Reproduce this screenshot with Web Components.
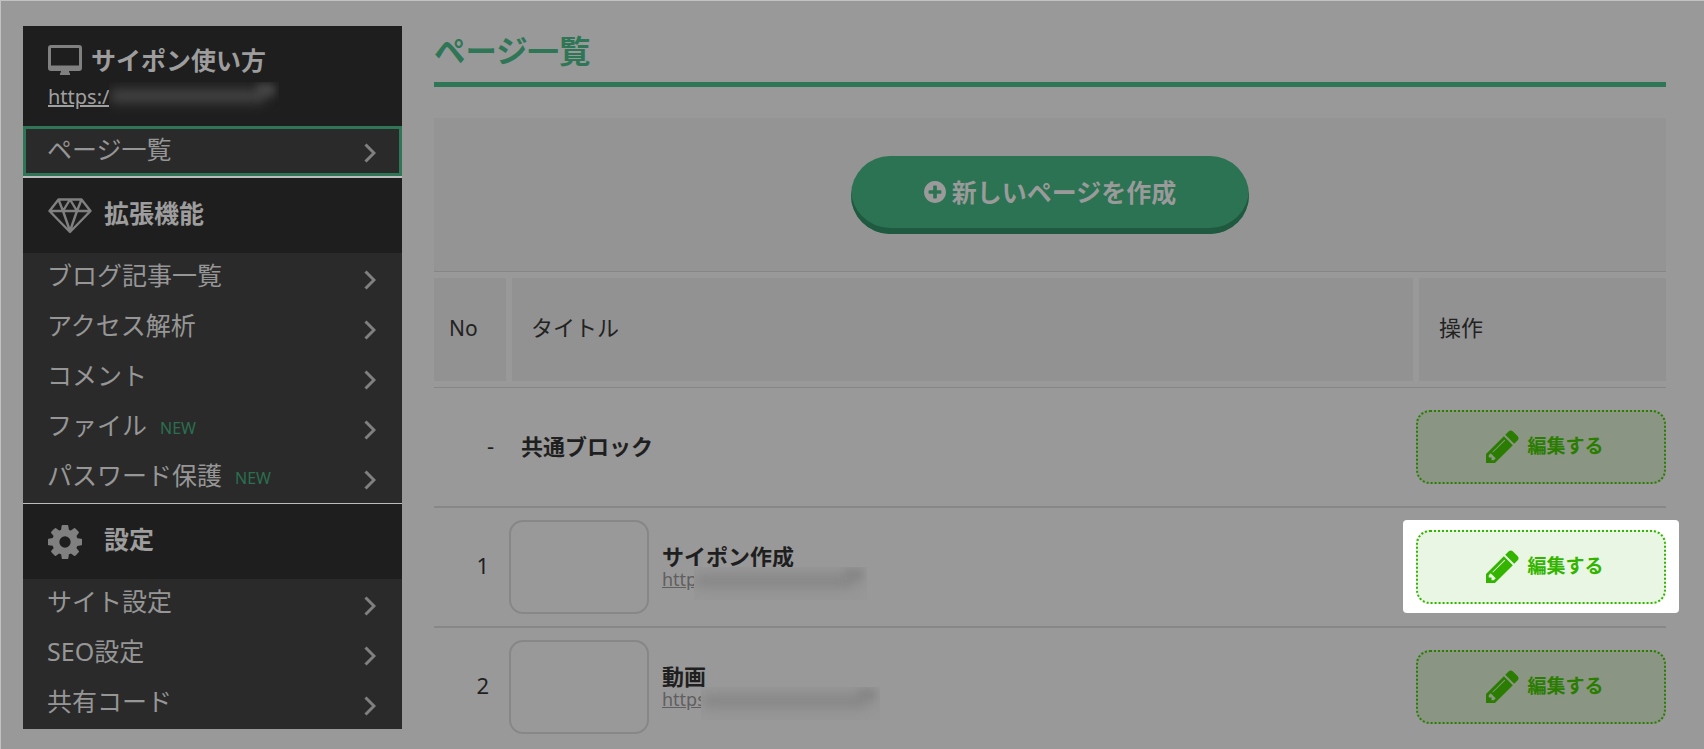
<!DOCTYPE html>
<html lang="ja">
<head>
<meta charset="utf-8">
<title>ページ一覧</title>
<style>
  html, body { margin: 0; height: 749px; overflow: hidden; background: #999; }
  body {
    box-sizing: border-box;
    border-top: 1px solid #c2c2c2;
    border-left: 1px solid #c2c2c2;
    font-family: "Noto Sans", "Noto Sans CJK JP", sans-serif;
  }
</style>
</head>
<body>
<app-shell>
  <side-nav slot="nav"></side-nav>
  <page-list slot="main"></page-list>
</app-shell>

<script>
  const FONT = '"Noto Sans", "Noto Sans CJK JP", sans-serif';
  const ICON = {
    pencil: 'M491 1536l91-91-235-235-91 91v107h128v128h107zm523-928q0-22-22-22-10 0-17 7l-542 542q-7 7-7 17 0 22 22 22 10 0 17-7l542-542q7-7 7-17zm-54-192l416 416-832 832h-416v-416zm683 96q0 53-37 90l-166 166-416-416 166-165q36-38 90-38 53 0 91 38l235 234q37 39 37 91z',
    gear: 'M1152 896q0-106-75-181t-181-75-181 75-75 181 75 181 181 75 181-75 75-181zm512-109v222q0 12-8 23t-20 13l-185 28q-19 54-39 91 35 50 107 138 10 12 10 25t-9 23q-27 37-99 108t-94 71q-12 0-26-9l-138-108q-44 23-91 38-16 136-29 186-7 28-36 28h-222q-14 0-24.5-8.5t-11.5-21.5l-28-184q-49-16-90-37l-141 107q-10 9-25 9-14 0-25-11-126-114-165-168-7-10-7-23 0-12 8-23 15-21 51-66.500t54-70.500q-27-50-41-99l-183-27q-13-2-21-12.500t-8-23.500v-222q0-12 8-23t19-13l186-28q14-46 39-92-40-57-107-138-10-12-10-24 0-10 9-23 26-36 98.500-107.500t94.500-71.500q13 0 26 10l138 107q44-23 91-38 16-136 29-186 7-28 36-28h222q14 0 24.500 8.500t11.500 21.500l28 184q49 16 90 37l142-107q9-9 24-9 13 0 25 10 129 119 165 170 7 8 7 22 0 12-8 23-15 21-51 66.500t-54 70.500q26 50 41 98l183 28q13 2 21 12.500t8 23.500z',
    plus: 'M1344 960v-128q0-26-19-45t-45-19h-256v-256q0-26-19-45t-45-19h-128q-26 0-45 19t-19 45v256h-256q-26 0-45 19t-19 45v128q0 26 19 45t45 19h256v256q0 26 19 45t45 19h128q26 0 45-19t19-45v-256h256q26 0 45-19t19-45zm320-64q0 209-103 385.500t-279.500 279.500-385.500 103-385.500-103-279.500-279.500-103-385.500 103-385.500 279.500-279.500 385.500-103 385.500 103 279.500 279.500 103 385.500z'
  };

  class AppShell extends HTMLElement {
    constructor() {
      super();
      this.attachShadow({ mode: 'open' }).innerHTML = `
        <style>
          :host { display: flex; gap: 32px; padding: 25px 38px 0 22px; font-family: ${FONT}; }
          .nav { flex: 0 0 379px; }
          .main { flex: 1; min-width: 0; }
        </style>
        <div class="nav"><slot name="nav"></slot></div>
        <div class="main"><slot name="main"></slot></div>
      `;
    }
  }

  // 見出し(濃い帯)
  class NavHead extends HTMLElement {
    constructor() {
      super();
      this.attachShadow({ mode: 'open' }).innerHTML = `
        <style>
          :host {
            display: flex; align-items: center; box-sizing: border-box;
            height: 75px; padding-left: 25px; background: #1e1e1e;
            color: #9d9d9d; font-size: 25px; font-weight: 700; line-height: 34px;
          }
          ::slotted(svg) { display: block; flex: none; }
          ::slotted(span) { margin-bottom: 6px; }
        </style>
        <slot name="icon"></slot><slot></slot>
      `;
    }
  }

  class NavItem extends HTMLElement {
    constructor() {
      super();
      const badge = this.hasAttribute('new') ? '<span class="new">NEW</span>' : '';
      this.attachShadow({ mode: 'open' }).innerHTML = `
        <style>
          :host {
            display: flex; align-items: center; box-sizing: border-box;
            height: 50px; padding: 0 26px 0 24px; background: #2a2a2a;
            color: #969696; font-size: 25px; line-height: 34px;
          }
          :host([active]) { border: 3px solid #2e7656; padding: 0 23px 0 21px; }
          .label { margin-bottom: 6px; }
          :host([active]) .label { margin-bottom: 4px; }
          .new { color: #2b6f50; font-size: 16px; margin-left: 13px; }
          svg { margin-left: auto; margin-top: 4px; display: block; }
        </style>
        <span class="label"><slot></slot></span>${badge}
        <svg width="12" height="20" viewBox="0 0 12 20"><path d="M1.500 1.500 10 10 1.500 18.500" fill="none" stroke="#808080" stroke-width="3"/></svg>
      `;
    }
  }

  class SideNav extends HTMLElement {
    constructor() {
      super();
      this.attachShadow({ mode: 'open' }).innerHTML = `
        <style>
          :host { display: block; }
          .site { box-sizing: border-box; height: 100px; padding: 17px 25px 0; background: #1e1e1e; }
          .site-title { display: flex; align-items: center; gap: 9px; height: 34px; color: #9d9d9d; font-size: 25px; font-weight: 700; line-height: 34px; }
          .site-url { display: flex; margin-top: 5px; height: 33px; color: #a0a0a0; font-size: 20px; line-height: 29px; }
          .site-url u { width: 61px; white-space: nowrap; }
          blur-mask { width: 170px; height: 33px; --mask: #1f1f1f; --smear: #484848; }
          .rule { height: 2px; background: #bdbdbd; }
          .rule.thin { height: 1px; }
          svg { display: block; }
        </style>
        <div class="site">
          <div class="site-title">
            <svg width="34" height="30" viewBox="0 0 34 30"><path fill="#808080" fill-rule="evenodd" d="M3 0h28a3 3 0 0 1 3 3v20a3 3 0 0 1-3 3H21c0 1 .5 2 1 2.500v1.500H12v-1.500c.5-.5 1-1.500 1-2.500H3a3 3 0 0 1-3-3V3a3 3 0 0 1 3-3zM3 3v17.500h28V3z"/></svg>
            <span>サイポン使い方</span>
          </div>
          <div class="site-url"><u>https:/</u><blur-mask></blur-mask></div>
        </div>
        <nav-item active>ページ一覧</nav-item>
        <div class="rule"></div>
        <nav-head>
          <svg slot="icon" width="44" height="36" viewBox="0 0 44 36"><path fill="none" stroke="#808080" stroke-width="2.400" stroke-linejoin="round" d="M10.500 1.500h23L42.500 13 22 34 1.500 13zM1.500 13h41M15 13l7 20 7-20M10.500 1.500 15 13l7-11.500L29 13l4.500-11.500"/></svg>
          <span style="margin-left:12px">拡張機能</span>
        </nav-head>
        <nav-item>ブログ記事一覧</nav-item>
        <nav-item>アクセス解析</nav-item>
        <nav-item>コメント</nav-item>
        <nav-item new>ファイル</nav-item>
        <nav-item new>パスワード保護</nav-item>
        <div class="rule thin"></div>
        <nav-head>
          <svg slot="icon" width="34" height="34" viewBox="128 128 1536 1536"><path fill="#808080" d="${ICON.gear}"/></svg>
          <span style="margin-left:22px">設定</span>
        </nav-head>
        <nav-item>サイト設定</nav-item>
        <nav-item>SEO設定</nav-item>
        <nav-item>共有コード</nav-item>
      `;
    }
  }

  // URLのぼかし部分
  class BlurMask extends HTMLElement {
    constructor() {
      super();
      this.attachShadow({ mode: 'open' }).innerHTML = `
        <style>
          :host { display: block; position: relative; overflow: hidden; background: var(--mask); flex: none; }
          i { position: absolute; left: 2px; right: 14px; top: 8px; height: 12px; background: var(--smear); filter: blur(6px); }
          b { position: absolute; right: 4px; top: 2px; width: 18px; height: 12px; background: var(--smear); filter: blur(4px); }
        </style>
        <i></i><b></b>
      `;
    }
  }

  class EditButton extends HTMLElement {
    constructor() {
      super();
      this.attachShadow({ mode: 'open' }).innerHTML = `
        <style>
          :host {
            display: flex; align-items: center; justify-content: center; gap: 8px; position: relative;
            box-sizing: border-box; width: 250px; height: 74px; padding-bottom: 2px;
            border: 2px dotted #2a7d00; border-radius: 14px; background: #8a9584;
            color: #2a7d00; font-size: 19px; font-weight: 700; line-height: 26px;
          }
          :host([hot]) { border-color: #33b500; background: #e9f6e3; color: #33b500; }
          :host([hot])::before {
            content: ""; position: absolute; inset: -12px -15px -11px; border-radius: 4px; background: #fff; z-index: -1;
          }
          svg { display: block; fill: currentColor; margin-left: 8px; }
        </style>
        <svg width="33" height="33" viewBox="128 128 1536 1536"><path d="${ICON.pencil}"/></svg>
        <span><slot></slot></span>
      `;
    }
  }

  class PageRow extends HTMLElement {
    constructor() {
      super();
      const no = this.getAttribute('no');
      const url = this.getAttribute('url');
      const thumb = url ? '<div class="thumb"></div>' : '';
      const link = url
        ? `<div class="url"><u style="width:${this.getAttribute('cut')}px">${url}</u><blur-mask style="width:${this.getAttribute('blur')}px"></blur-mask></div>`
        : '';
      this.attachShadow({ mode: 'open' }).innerHTML = `
        <style>
          :host {
            display: flex; align-items: center;
            height: 118px; border-bottom: 2px solid #878787; color: #1f1f1f; isolation: isolate;
          }
          :host([last]) { border-bottom: 0; }
          .no { flex: 0 0 55px; padding-bottom: 4px; text-align: right; font-size: 22px; line-height: 30px; }
          :host([common]) .no { flex-basis: 60px; }
          .thumb { flex: none; box-sizing: border-box; width: 140px; height: 94px; margin-left: 20px; border: 2px solid #878787; border-radius: 14px; }
          .info { margin-left: 13px; }
          :host([common]) .info { margin-left: 27px; margin-bottom: 2px; }
          .name { font-size: 22px; font-weight: 700; line-height: 28px; }
          .info:has(.url) .name { padding: 5px 0 1px; line-height: 22px; }
          .url { display: flex; height: 24px; color: #5f5f5f; font-size: 18px; line-height: 22px; margin-bottom: 2px; }
          .url u { white-space: nowrap; }
          blur-mask { height: 33px; margin-top: -1px; --mask: #979797; --smear: #858585; }
          edit-button { margin-left: auto; }
        </style>
        <div class="no">${no}</div>
        ${thumb}
        <div class="info">
          <div class="name"><slot></slot></div>
          ${link}
        </div>
        <edit-button ${this.hasAttribute('hot') ? 'hot' : ''}>編集する</edit-button>
      `;
    }
  }

  class PageList extends HTMLElement {
    constructor() {
      super();
      this.attachShadow({ mode: 'open' }).innerHTML = `
        <style>
          :host { display: block; }
          h1 {
            margin: 0 0 31px; padding-bottom: 6px; height: 50px; line-height: 50px;
            border-bottom: 5px solid #2e7656; color: #2e7656; font-size: 31.400px; font-weight: 700;
          }
          .create {
            display: flex; align-items: center; justify-content: center; height: 153px;
            background: #949494; border-bottom: 1px solid #868686;
          }
          .btn {
            display: flex; align-items: center; justify-content: center; gap: 6px;
            box-sizing: border-box; width: 398px; height: 78px; padding-bottom: 6px;
            border-radius: 39px; background: #2b7352; box-shadow: inset 0 -6px 0 #1f5a40;
            color: #9a9a9a; font-size: 25px; font-weight: 700; line-height: 34px;
          }
          .btn svg { display: block; fill: currentColor; }
          .head {
            display: grid; grid-template-columns: 72px 1fr 247px; gap: 6px;
            padding: 6px 0; border-bottom: 1px solid #868686;
          }
          .head div {
            display: flex; align-items: center; box-sizing: border-box; height: 103px; padding-bottom: 5px;
            background: #929292; color: #222; font-size: 22px; line-height: 30px;
          }
          .head div:nth-child(1) { padding-left: 15px; padding-bottom: 3px; font-size: 21px; }
          .head div:nth-child(2) { padding-left: 19px; }
          .head div:nth-child(3) { padding-left: 20px; }
        </style>
        <h1>ページ一覧</h1>
        <div class="create">
          <div class="btn">
            <svg width="22" height="22" viewBox="128 128 1536 1536"><path d="${ICON.plus}"/></svg>
            <span>新しいページを作成</span>
          </div>
        </div>
        <div class="head"><div>No</div><div>タイトル</div><div>操作</div></div>
        <page-row no="-" common>共通ブロック</page-row>
        <page-row no="1" url="http" cut="32" blur="173" hot>サイポン作成</page-row>
        <page-row no="2" url="https" cut="39" blur="179" last>動画</page-row>
      `;
    }
  }

  customElements.define('app-shell', AppShell);
  customElements.define('blur-mask', BlurMask);
  customElements.define('nav-head', NavHead);
  customElements.define('nav-item', NavItem);
  customElements.define('side-nav', SideNav);
  customElements.define('edit-button', EditButton);
  customElements.define('page-row', PageRow);
  customElements.define('page-list', PageList);
</script>
</body>
</html>
